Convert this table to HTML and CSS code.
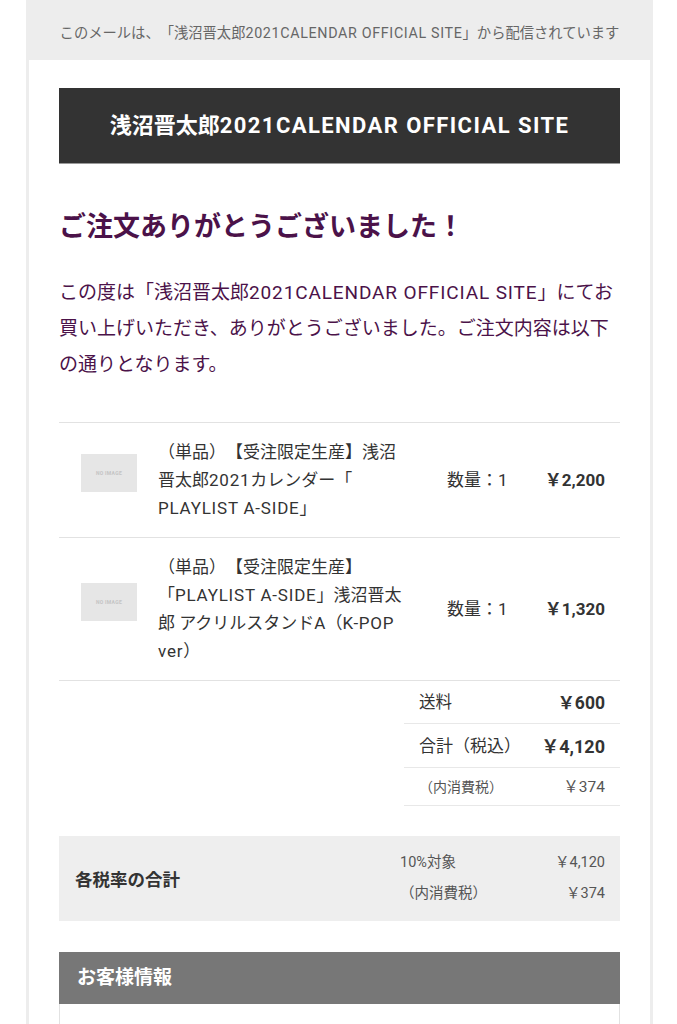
FILE: index.html
```html
<!DOCTYPE html>
<html lang="ja">
<head>
<meta charset="utf-8">
<title>ご注文ありがとうございました</title>
<link rel="stylesheet" href="styles.css">
</head>
<body>
<div class="wrap">
  <p class="notice">このメールは、「浅沼晋太郎<span class="en">2021CALENDAR OFFICIAL SITE</span>」から配信されています</p>
  <div class="mail">
    <div class="brand">浅沼晋太郎<span class="en">2021CALENDAR OFFICIAL SITE</span></div>
    <h1 class="thanks">ご注文ありがとうございました！</h1>
    <p class="lead">この度は「浅沼晋太郎<span class="en">2021CALENDAR OFFICIAL SITE</span>」にてお買い上げいただき、ありがとうございました。ご注文内容は以下の通りとなります。</p>

    <div class="items">
      <div class="item">
        <div class="thumb-cell"><div class="thumb">NO IMAGE</div></div>
        <div class="name">（単品）【受注限定生産】浅沼晋太郎<span class="en">2021</span>カレンダー「<wbr><span class="en">PLAYLIST A-SIDE</span>」</div>
        <div class="qty">数量：1</div>
        <div class="price">￥2,200</div>
      </div>
      <div class="item">
        <div class="thumb-cell"><div class="thumb">NO IMAGE</div></div>
        <div class="name">（単品）【受注限定生産】「<span class="en">PLAYLIST A-SIDE</span>」浅沼晋太郎 アクリルスタンドA（<span class="en">K-POP ver</span>）</div>
        <div class="qty">数量：1</div>
        <div class="price">￥1,320</div>
      </div>
    </div>

    <div class="totals">
      <div class="trow">
        <span class="tlabel">送料</span>
        <span class="tval strong">￥600</span>
      </div>
      <div class="trow total">
        <span class="tlabel">合計（税込）</span>
        <span class="tval strong">￥4,120</span>
      </div>
      <div class="trow tax">
        <span class="tlabel">（内消費税）</span>
        <span class="tval">￥374</span>
      </div>
    </div>

    <div class="taxbox">
      <div class="taxtitle">各税率の合計</div>
      <div class="taxlist">
        <span>10%対象</span><span class="r">￥4,120</span>
        <span>（内消費税）</span><span class="r">￥374</span>
      </div>
    </div>

    <div class="section-head">お客様情報</div>
    <div class="section-body"></div>
  </div>
</div>
</body>
</html>
```

FILE: styles.css
```css
html, body {
  margin: 0;
  padding: 0;
  background: #ffffff;
}
body {
  font-family: Roboto, "Noto Sans CJK JP", sans-serif;
  color: #333333;
  text-spacing-trim: space-all;
}
.en {
  letter-spacing: 0.046em;
}
.wrap {
  width: 627px;
  margin: 0 0 0 26px;
  background: #ededed;
  padding: 0 3px;
  box-sizing: border-box;
  min-height: 1024px;
}
.notice {
  margin: 0;
  height: 60px;
  line-height: 67px;
  text-align: center;
  font-size: 14.3px;
  color: #666666;
  white-space: nowrap;
}
.mail {
  background: #ffffff;
  padding: 28px 30px 0;
  min-height: 964px;
  box-sizing: border-box;
}
.brand {
  background: #333333;
  color: #ffffff;
  font-weight: bold;
  font-size: 22px;
  line-height: 30px;
  padding: 23px 0 22px;
  text-align: center;
  border-bottom: 1px solid #9a9a9a;
}
.brand .en {
  letter-spacing: 0.065em;
}
.thanks {
  margin: 45px 0 0;
  font-size: 27px;
  line-height: 36px;
  font-weight: bold;
  color: #4b1249;
}
.lead {
  margin: 30px 0 0;
  font-size: 19px;
  line-height: 36px;
  color: #4b1249;
}
.items {
  margin-top: 39px;
  border-top: 1px solid #e2e2e2;
}
.item {
  display: grid;
  grid-template-columns: 99px 245px 1fr auto;
  align-items: center;
  padding: 15px 0;
  border-bottom: 1px solid #e2e2e2;
  font-size: 17px;
  line-height: 28px;
  color: #333333;
}
.thumb-cell {
  padding-left: 22px;
}
.thumb {
  width: 56px;
  height: 38px;
  margin-bottom: 14px;
  background: #e6e6e6;
  color: #c4c4c4;
  font-size: 5px;
  line-height: 38px;
  text-align: center;
  font-weight: bold;
  letter-spacing: 0.3px;
}
.qty {
  padding-left: 44px;
}
.price {
  font-weight: bold;
  padding-right: 15px;
  text-align: right;
}
.totals {
  margin-left: auto;
  width: 216px;
}
.trow {
  display: flex;
  justify-content: space-between;
  align-items: center;
  padding: 11px 15px 9px;
  line-height: 22px;
  font-size: 16.5px;
  border-bottom: 1px solid #e8e8e8;
  color: #333333;
}
.trow.total {
  line-height: 23px;
  font-size: 17px;
}
.trow.total .tval {
  font-size: 18px;
}
.trow.tax {
  padding: 9px 15px 7px;
  line-height: 21px;
  font-size: 14px;
  color: #555555;
}
.trow.tax .tval {
  font-size: 15.5px;
}
.strong {
  font-weight: bold;
  font-size: 17.5px;
}
.taxbox {
  margin-top: 30px;
  background: #eeeeee;
  display: flex;
  align-items: center;
  justify-content: space-between;
  padding: 11px 15px 12px 16px;
}
.taxtitle {
  font-weight: bold;
  font-size: 17.5px;
  color: #333333;
}
.taxlist {
  display: grid;
  grid-template-columns: 120px 85px;
  font-size: 14.5px;
  line-height: 31px;
  color: #555555;
}
.taxlist .r {
  text-align: right;
}
.section-head {
  margin-top: 31px;
  background: #777777;
  color: #ffffff;
  font-weight: bold;
  font-size: 19px;
  line-height: 28px;
  padding: 12px 18px;
}
.section-body {
  border: 1px solid #e2e2e2;
  border-top: none;
  height: 120px;
}
```
